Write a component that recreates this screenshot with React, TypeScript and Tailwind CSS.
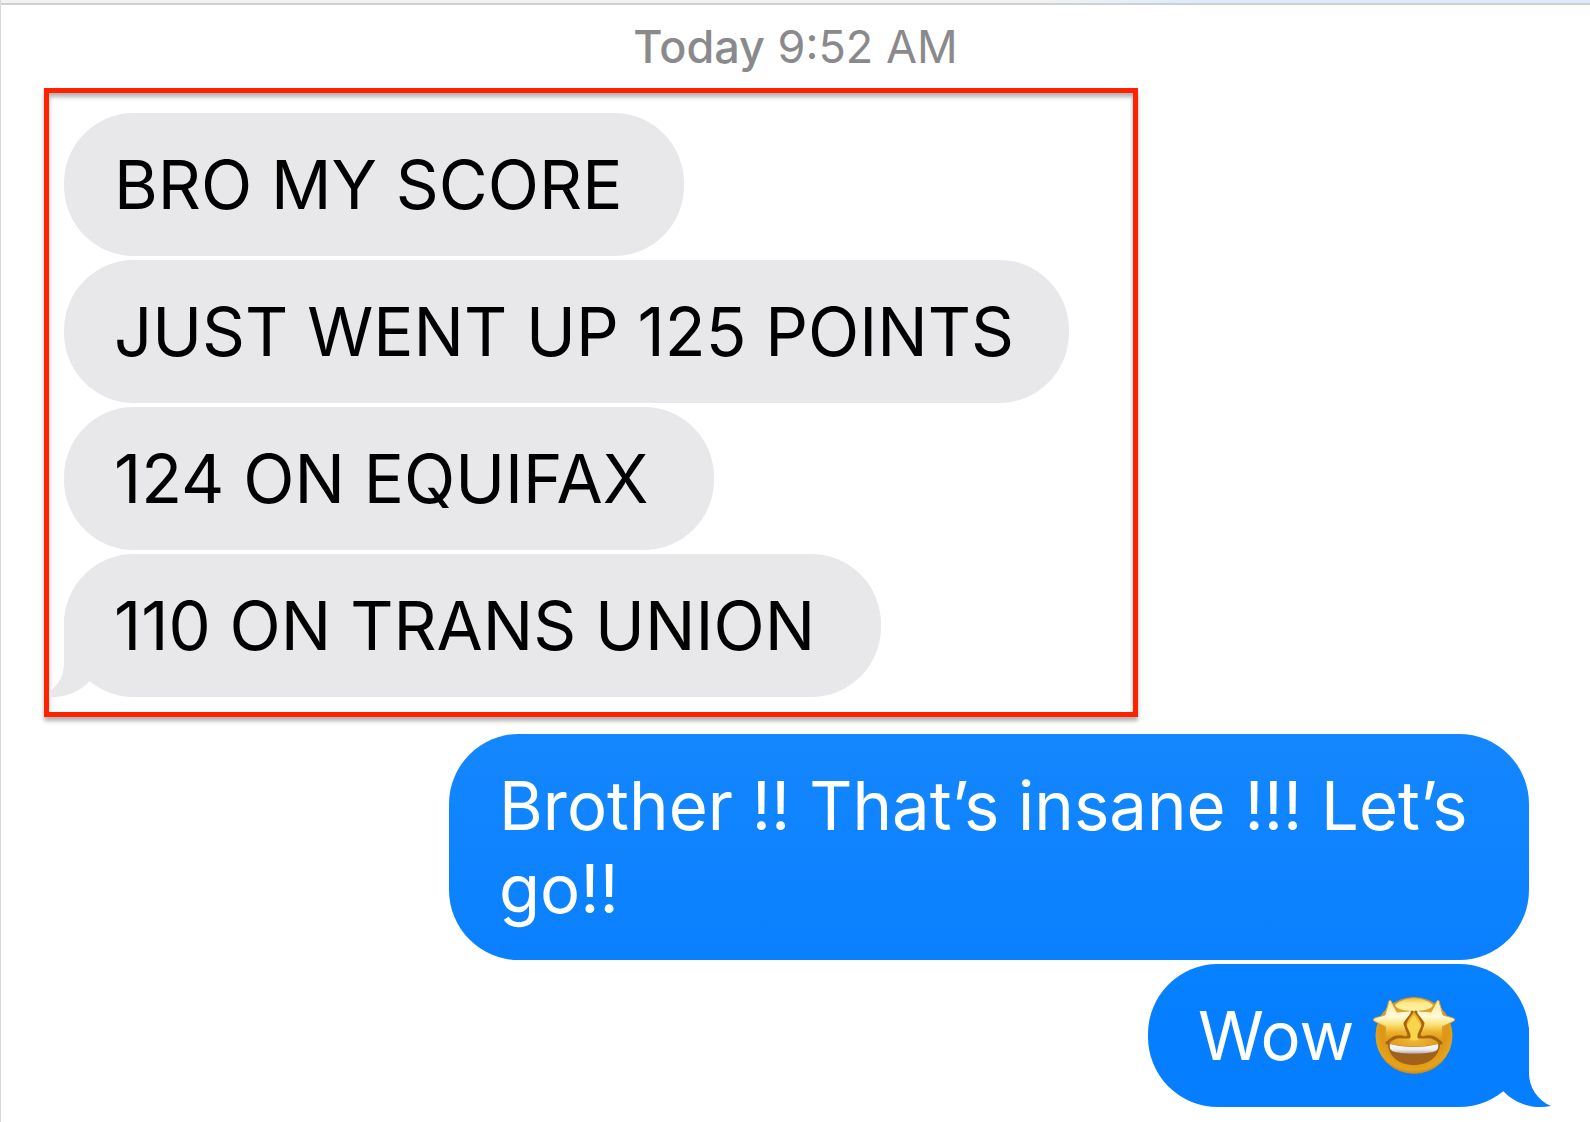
import { clsx } from 'clsx'

type Message = {
  text: string
  width: string
}

const received: Message[] = [
  { text: 'BRO MY SCORE', width: 'w-[620px]' },
  { text: 'JUST WENT UP 125 POINTS', width: 'w-[1005px]' },
  { text: '124 ON EQUIFAX', width: 'w-[650px]' },
  { text: '110 ON TRANS UNION', width: 'w-[817px]' },
]

const bubble = 'relative rounded-[70px] py-[30px] pl-[50px] text-[67px] leading-[83px] whitespace-nowrap'

function Tail({ className }: { className: string }) {
  return (
    <svg viewBox="0 0 80 80" className={clsx('absolute bottom-0 h-20 w-20', className)} aria-hidden="true">
      <path d="M22 0V46C22 60 14 73 0 79C18 82 34 78 48 64L80 40V0Z" fill="currentColor" />
    </svg>
  )
}

function StarStruck() {
  return (
    <svg viewBox="0 0 84 80" className="h-20 w-[84px]" role="img" aria-label="star-struck">
      <defs>
        <radialGradient id="face" cx="50%" cy="42%" r="60%">
          <stop offset="0" stopColor="#f6cf45" />
          <stop offset="0.35" stopColor="#e9ac2a" />
          <stop offset="0.7" stopColor="#dd9518" />
          <stop offset="0.88" stopColor="#e6a31c" />
          <stop offset="1" stopColor="#c07810" />
        </radialGradient>
        <linearGradient id="shine" x1="0" y1="0" x2="0" y2="1">
          <stop offset="0" stopColor="#f3bf38" />
          <stop offset="0.4" stopColor="#fdeb92" />
          <stop offset="1" stopColor="#fff3a8" />
        </linearGradient>
        <linearGradient id="star" x1="0" y1="0" x2="0" y2="1">
          <stop offset="0" stopColor="#fce98c" />
          <stop offset="0.4" stopColor="#fffbdc" />
          <stop offset="0.58" stopColor="#fbe680" />
          <stop offset="0.78" stopColor="#eeb42c" />
          <stop offset="1" stopColor="#dd9518" />
        </linearGradient>
        <linearGradient id="teeth" x1="0" y1="0" x2="0" y2="1">
          <stop offset="0" stopColor="#ffffff" />
          <stop offset="0.6" stopColor="#ececf0" />
          <stop offset="1" stopColor="#b5b0b4" />
        </linearGradient>
      </defs>
      <circle cx="42" cy="39.5" r="38.5" fill="url(#face)" />
      <path d="M23 9C33 0 51 0 61 9C59 17 25 17 23 9Z" fill="url(#shine)" />
      <path d="M40 22Q42 17 44 22L50 32L47 43Q42 46 37 43L34 32Z" fill="#f7d54c" />
      <path d="M16 47C32 52 52 52 68 47C68 60 57 69 42 69S16 60 16 47Z" fill="#a0611a" />
      <path d="M18 48C33 52 51 52 66 48C67 53 65 55 61 56C49 58 35 58 23 56C19 55 17 53 18 48Z" fill="url(#teeth)" />
      <g id="eye">
        <path
          d="M40 16C35 23 33 25 33 29C34 34 38 38 37 41C31 42 25 37 15 47"
          fill="none"
          stroke="#a8640e"
          strokeWidth="3"
          strokeLinecap="round"
          strokeLinejoin="round"
        />
        <path
          d="M17 5Q18 3 19 5L25 16L37 15Q40 15 38 18L31 27L35 38Q35 41 32 40L24 37L16 44Q14 46 14 43L14 31L2 25Q0 23 3 22L13 19Z"
          fill="url(#star)"
        />
        <path
          d="M14 31L2 25Q0 23 3 22L13 19L17 5Q18 3 19 5L25 16L37 15"
          fill="none"
          stroke="#e0a030"
          strokeLinejoin="round"
        />
      </g>
      <use href="#eye" transform="matrix(-1 0 0 1 84 0)" />
    </svg>
  )
}

export default function App() {
  return (
    <main className="min-h-screen border-l border-[#d8d8d8] bg-white pb-[15px] font-['Inter',sans-serif]">
      <div className="h-[5px] border-b-2 border-[#cfd0d1] bg-gradient-to-r from-[#f2f2f2] from-65% to-[#dcebfa] to-75%" />

      <p className="mt-[14px] text-center text-[45px] leading-[56px] text-[#8a8a8d]">
        <time>
          <span className="font-medium">Today</span> 9:52 AM
        </time>
      </p>

      <section className="mt-[13px] mr-[452px] ml-[43px] flex flex-col items-start gap-1 overflow-hidden border-[5px] border-[#ff2200] px-[15px] pt-5 pb-[15px] shadow-[0_4px_4px_rgba(0,0,0,0.3),inset_0_4px_4px_rgba(0,0,0,0.3)]">
        {received.map((message, i) => (
          <p key={message.text} className={clsx(bubble, message.width, 'bg-[#e8e8ea] text-black')}>
            {i === received.length - 1 && <Tail className="-left-[22px] text-[#e8e8ea]" />}
            <span className="relative">{message.text}</span>
          </p>
        ))}
      </section>

      <section className="mt-[17px] mr-[61px] flex flex-col items-end gap-1 text-white">
        <p className={clsx(bubble, 'w-[1080px] bg-gradient-to-b from-[#1487fe] to-[#0a80ff]')}>
          Brother !! That’s insane !!! Let’s
          <br />
          go!!
        </p>
        <p className={clsx(bubble, 'flex w-[381px] items-center bg-gradient-to-b from-[#0782ff] to-[#057eff] to-40%')}>
          <Tail className="-right-[22px] -scale-x-100 text-[#057eff]" />
          <span className="relative mr-[18px]">Wow</span>
          <StarStruck />
        </p>
      </section>
    </main>
  )
}
